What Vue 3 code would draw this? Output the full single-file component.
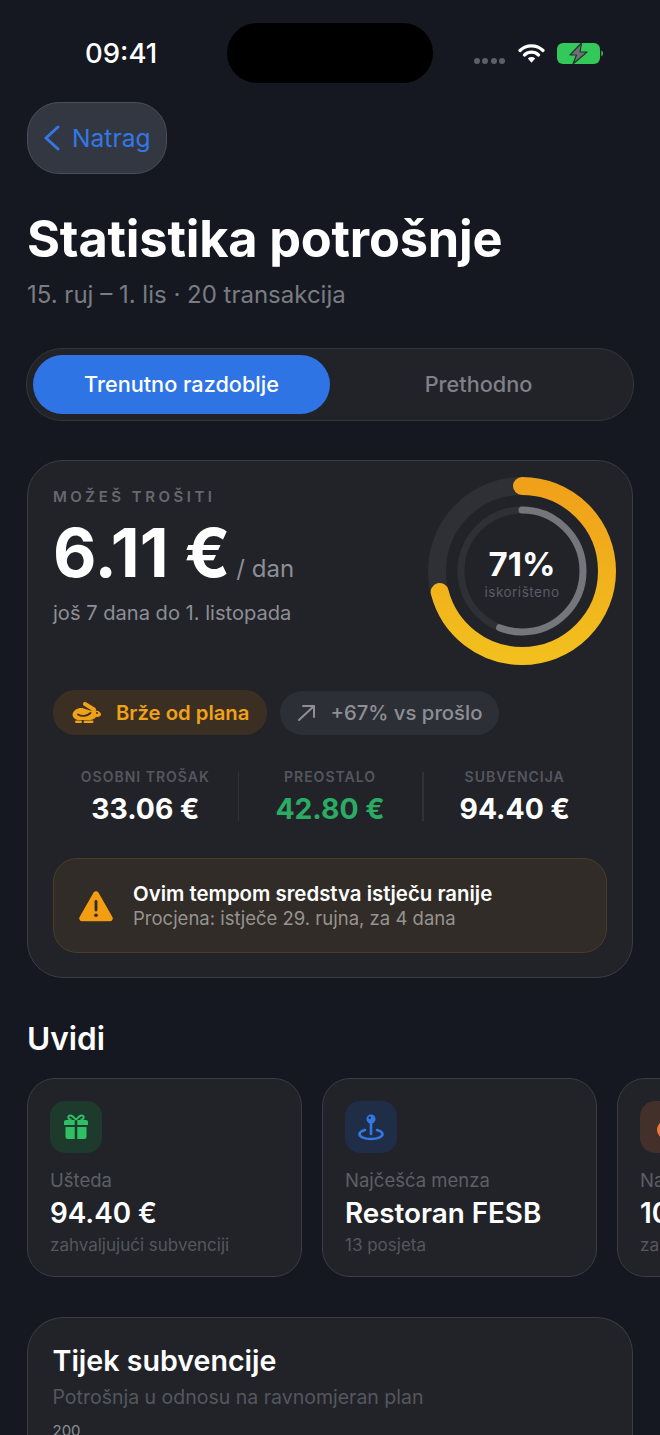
<template>
  <div class="page">
    <div class="status-bar">
      <span class="time">09:41</span>
      <div class="island"></div>
      <div class="status-icons">
        <div class="dots"><i></i><i></i><i></i><i></i></div>
        <svg class="wifi" width="27" height="20" viewBox="0 0 27 20">
          <path d="M2 7.500a16.500 16.500 0 0 1 23 0M6.500 12a10 10 0 0 1 14 0" fill="none" stroke="#fff" stroke-width="3.200" stroke-linecap="round" />
          <path d="M9.800 15.400a5.500 5.500 0 0 1 7.400 0L13.500 19.800z" fill="#fff" />
        </svg>
        <svg class="battery" width="46" height="21" viewBox="0 0 46 21">
          <rect x="0" y="0" width="43" height="21" rx="6" fill="#34c759" />
          <path d="M44.300 7.500v6c1-.4 1.700-1.600 1.700-3s-.7-2.600-1.700-3z" fill="#34c759" />
          <path d="M24.500 0 13 12h6.500L16 21 30 9h-7z" fill="#6d7076" stroke="#20352a" stroke-width="1.200" stroke-linejoin="round" />
        </svg>
      </div>
    </div>

    <div class="content">
      <button class="back">
        <svg width="16" height="26" viewBox="0 0 16 26">
          <path d="M14 2 2 13l12 11" fill="none" stroke="#3478e5" stroke-width="3" stroke-linecap="round" stroke-linejoin="round" />
        </svg>
        <span>Natrag</span>
      </button>

      <h1>Statistika potrošnje</h1>
      <p class="period">15. ruj – 1. lis · 20 transakcija</p>

      <div class="tabs">
        <button class="tab active">Trenutno razdoblje</button>
        <button class="tab">Prethodno</button>
      </div>

      <section class="card main-card">
        <div class="hero">
          <div class="hero-text">
            <div class="eyebrow">MOŽEŠ TROŠITI</div>
            <div class="amount"><strong>6.11 €</strong><span>/ dan</span></div>
            <div class="days">još 7 dana do 1. listopada</div>
          </div>
          <div class="ring">
            <svg width="188" height="188" viewBox="0 0 188 188">
              <defs>
                <linearGradient id="ringGrad" x1="1" y1="0" x2="0" y2="0">
                  <stop offset="0" stop-color="#f0a11a" />
                  <stop offset="1" stop-color="#f2bf1e" />
                </linearGradient>
              </defs>
              <circle cx="94" cy="94" r="85" class="track" stroke-width="18" />
              <circle cx="94" cy="94" r="61" class="track" stroke-width="7" />
              <circle cx="94" cy="94" r="85" class="arc" stroke="url(#ringGrad)" stroke-width="18" pathLength="100" :stroke-dasharray="`${usedPct} 100`" transform="rotate(-90 94 94)" />
              <circle cx="94" cy="94" r="61" class="arc" stroke="#74767c" stroke-width="7" pathLength="100" :stroke-dasharray="`${innerPct} 100`" transform="rotate(-90 94 94)" />
            </svg>
            <div class="ring-label">
              <b>{{ usedPct }}%</b>
              <span>iskorišteno</span>
            </div>
          </div>
        </div>

        <div class="pills">
          <div class="pill pill-warn">
            <svg width="29" height="21" viewBox="0 0 29 21">
              <path d="M.5 12C2 7.500 7 5 12 6.500c3 1 6 2.500 9 2 4-.5 8 1 8 4 0 2-3 2.500-5 2.500-1.500 2.500-5 3-8 3H7c-4 0-6.500-2.500-6.500-6z" fill="#f0a11a" />
              <path d="M13 2 22 7.500" fill="none" stroke="#f0a11a" stroke-width="4" stroke-linecap="round" />
              <path d="M6 12.500c3.500 2.200 9 2 12.500-1.500" fill="none" stroke="#3a2f22" stroke-width="1.800" stroke-linecap="round" />
              <rect x="3" y="18.400" width="7" height="2.600" rx="1.300" fill="#f0a11a" />
              <rect x="11.500" y="18.400" width="10" height="2.600" rx="1.300" fill="#f0a11a" />
              <circle cx="25" cy="11" r="1" fill="#3a2f22" />
            </svg>
            <span>Brže od plana</span>
          </div>
          <div class="pill pill-muted">
            <svg width="18" height="18" viewBox="0 0 18 18">
              <path d="M1 16 16 2M5 2h11v11" fill="none" stroke="#8d8f95" stroke-width="2" stroke-linecap="round" stroke-linejoin="round" />
            </svg>
            <span>+67% vs prošlo</span>
          </div>
        </div>

        <div class="stats">
          <div v-for="s in stats" :key="s.label" class="stat">
            <div class="stat-label">{{ s.label }}</div>
            <div class="stat-value" :class="{ green: s.green }">{{ s.value }}</div>
          </div>
        </div>

        <div class="warning">
          <svg width="36" height="32" viewBox="0 0 36 32">
            <path d="M15.600 2.600a2.800 2.800 0 0 1 4.800 0l14 24.500c1 1.900-.3 4.200-2.400 4.200H4c-2.100 0-3.400-2.300-2.400-4.200z" fill="#f29d12" />
            <rect x="16.600" y="10" width="2.800" height="11.500" rx="1.400" fill="#2e2a26" />
            <circle cx="18" cy="25.300" r="1.800" fill="#2e2a26" />
          </svg>
          <div>
            <div class="warning-title">Ovim tempom sredstva istječu ranije</div>
            <div class="warning-sub">Procjena: istječe 29. rujna, za 4 dana</div>
          </div>
        </div>
      </section>

      <h2>Uvidi</h2>
    </div>

    <div class="insights">
      <div v-for="c in insights" :key="c.label" class="card insight">
        <div class="insight-icon" :class="c.kind">
          <svg v-if="c.kind === 'gift'" width="24" height="26" viewBox="0 0 24 26">
            <path d="M7.500 5.500C5 5.500 4 4.200 4.300 3c.4-1.600 2.500-2 4-.9 1.600 1.100 3 3.400 3.700 3.400.7 0 2.100-2.300 3.700-3.400 1.500-1.100 3.600-.7 4 .9.3 1.200-.7 2.500-3.200 2.500" fill="none" stroke="#2fbf64" stroke-width="2" />
            <path d="M2 6h8.700v5H0V8a2 2 0 0 1 2-2zM13.300 6H22a2 2 0 0 1 2 2v3H13.300zM1.500 13h9.200v12H4a2.500 2.500 0 0 1-2.500-2.500zM13.300 13h9.200v9.500A2.500 2.500 0 0 1 20 25h-6.700z" fill="#2fbf64" />
          </svg>
          <svg v-else-if="c.kind === 'pin'" width="26" height="28" viewBox="0 0 26 28">
            <circle cx="13" cy="6" r="4.500" fill="#3478e5" />
            <circle cx="11.800" cy="4.800" r="1.300" fill="#1f2e46" />
            <path d="M13 10v11" stroke="#3478e5" stroke-width="2.600" stroke-linecap="round" />
            <path d="M7 17c-3.500.9-5.500 2.300-5.500 4.300 0 2.600 5 4.700 11.500 4.700s11.500-2.100 11.500-4.700c0-2-2-3.400-5.500-4.300" fill="none" stroke="#3478e5" stroke-width="2.600" stroke-linecap="round" />
          </svg>
          <svg v-else width="24" height="28" viewBox="0 0 24 28">
            <path d="M12 1c1 5 9 8 9 16a9 9 0 0 1-18 0c0-4 2-6 4-8 .5 2 1.500 3 2.500 3C10 9 10 5 12 1z" fill="#f0793a" />
          </svg>
        </div>
        <div class="insight-label">{{ c.label }}</div>
        <div class="insight-value">{{ c.value }}</div>
        <div class="insight-sub">{{ c.sub }}</div>
      </div>
    </div>

    <div class="content">
      <section class="card chart-card">
        <h3>Tijek subvencije</h3>
        <p>Potrošnja u odnosu na ravnomjeran plan</p>
        <div class="axis-label">200</div>
      </section>
    </div>
  </div>
</template>

<script setup>
const usedPct = 71
const innerPct = 56

const stats = [
  { label: 'OSOBNI TROŠAK', value: '33.06 €' },
  { label: 'PREOSTALO', value: '42.80 €', green: true },
  { label: 'SUBVENCIJA', value: '94.40 €' }
]

const insights = [
  { kind: 'gift', label: 'Ušteda', value: '94.40 €', sub: 'zahvaljujući subvenciji' },
  { kind: 'pin', label: 'Najčešća menza', value: 'Restoran FESB', sub: '13 posjeta' },
  { kind: 'fire', label: 'Najveći niz', value: '10 dana', sub: 'za redom' }
]
</script>

<style>
body {
  margin: 0;
  background: #151821;
}
</style>

<style scoped>
.page {
  height: 1435px;
  overflow: hidden;
  background: #151821;
  color: #fff;
  font-family: Inter, "Liberation Sans", sans-serif;
}

.status-bar {
  display: flex;
  align-items: center;
  height: 60px;
  padding: 23px 0 19px;
  position: relative;
}
.time {
  margin-left: 85px;
  font-size: 27.5px;
  font-weight: 500;
  line-height: 60px;
}
.island {
  position: absolute;
  left: 227px;
  top: 23px;
  width: 206px;
  height: 60px;
  border-radius: 30px;
  background: #000;
}
.status-icons {
  display: flex;
  align-items: center;
  margin-left: auto;
  margin-right: 57px;
  gap: 12px;
}
.dots {
  display: flex;
  gap: 2.500px;
  margin: 16px 1px 0 0;
}
.dots i {
  width: 6px;
  height: 6px;
  border-radius: 50%;
  background: #5c5f66;
}

.content {
  padding: 0 27px;
}

.back {
  display: flex;
  align-items: center;
  gap: 12px;
  width: 140px;
  height: 72px;
  padding: 0 0 0 16px;
  border: 1px solid #4a4e58;
  border-radius: 32px;
  background: #333742;
  color: #3478e5;
  font-family: inherit;
  font-size: 24.6px;
}

h1 {
  margin: 35px 0 0;
  font-size: 50.5px;
  line-height: 60px;
  font-weight: 700;
  letter-spacing: -0.2px;
}
.period {
  margin: 10px 0 0;
  font-size: 24px;
  line-height: 32px;
  color: #7a7c82;
}

.tabs {
  display: grid;
  grid-template-columns: 1fr 1fr;
  margin: 37px -1px 0;
  padding: 6px;
  height: 73px;
  box-sizing: border-box;
  border: 1.5px solid #34363d;
  border-radius: 36px;
  background: #212329;
}
.tab {
  padding: 0 0 2px;
  border: 0;
  border-radius: 30px;
  background: none;
  color: #7f8187;
  font-family: inherit;
  font-size: 21.7px;
  font-weight: 500;
}
.tab.active {
  background: #2f74e4;
  color: #fff;
}

.card {
  box-sizing: border-box;
  border: 1.5px solid #3a3d44;
  background: #212329;
}

.main-card {
  height: 518px;
  margin-top: 39px;
  padding: 26px 25px 24px;
  border-radius: 36px;
}
.hero {
  display: flex;
  justify-content: space-between;
  height: 203px;
}
.eyebrow {
  font-size: 15px;
  line-height: 20px;
  font-weight: 600;
  letter-spacing: 3.500px;
  color: #67696f;
}
.amount {
  display: flex;
  align-items: baseline;
  gap: 6px;
  margin-top: 10px;
}
.amount strong {
  font-size: 67px;
  line-height: 72px;
  font-weight: 700;
}
.amount span {
  font-size: 24px;
  color: #8d8f95;
}
.days {
  margin-top: 11px;
  font-size: 20.1px;
  line-height: 26px;
  color: #8d8f95;
}
.ring {
  position: relative;
  width: 188px;
  height: 188px;
  margin: -10px -9px 0 0;
}
.track {
  fill: none;
  stroke: #2f3036;
}
.arc {
  fill: none;
  stroke-linecap: round;
}
.ring-label {
  position: absolute;
  inset: 4px 0 0;
  display: flex;
  flex-direction: column;
  align-items: center;
  justify-content: center;
}
.ring-label b {
  font-size: 33px;
  line-height: 38px;
  font-weight: 700;
}
.ring-label span {
  font-size: 13.5px;
  line-height: 18px;
  color: #5a5c62;
  letter-spacing: 0.5px;
}

.pills {
  display: flex;
  align-items: center;
  gap: 13px;
}
.pill {
  display: flex;
  align-items: center;
  height: 44px;
  border-radius: 22px;
  font-size: 20.3px;
  font-weight: 600;
}
.pill-warn {
  gap: 15px;
  height: 45px;
  padding: 0 18px 0 19px;
  background: #3a2f22;
  color: #f0a11a;
}
.pill-muted {
  gap: 14px;
  padding: 0 17px 0 18px;
  background: #2d2f37;
  color: #8d8f95;
  font-weight: 500;
}

.stats {
  display: grid;
  grid-template-columns: repeat(3, 1fr);
  margin-top: 33px;
}
.stat {
  position: relative;
  text-align: center;
}
.stat + .stat::before {
  content: "";
  position: absolute;
  left: 0;
  top: 4px;
  width: 1.5px;
  height: 49px;
  background: #303238;
}
.stat-label {
  font-size: 14px;
  line-height: 18px;
  font-weight: 600;
  letter-spacing: 1px;
  color: #55575d;
}
.stat-value {
  margin-top: 6px;
  font-size: 28.3px;
  line-height: 34px;
  font-weight: 700;
}
.stat-value.green {
  color: #2bab63;
}

.warning {
  display: flex;
  align-items: center;
  gap: 19px;
  height: 95px;
  box-sizing: border-box;
  margin-top: 32px;
  padding: 0 24px;
  border: 1.5px solid #4a3c27;
  border-radius: 24px;
  background: #312c28;
}
.warning-title {
  font-size: 20.4px;
  line-height: 25px;
  font-weight: 600;
}
.warning-sub {
  font-size: 18.5px;
  line-height: 24px;
  color: #96948f;
}

h2 {
  margin: 41px 0 0;
  font-size: 31.6px;
  line-height: 40px;
  font-weight: 600;
}

.insights {
  display: flex;
  gap: 20px;
  margin-top: 19px;
  padding-left: 27px;
  overflow: hidden;
}
.insight {
  flex: 0 0 275px;
  height: 199px;
  padding: 22px 22px 0;
  border-radius: 28px;
}
.insight-icon {
  display: flex;
  align-items: center;
  justify-content: center;
  width: 52px;
  height: 52px;
  border-radius: 15px;
}
.insight-icon.gift { background: #1e3a2c; }
.insight-icon.pin { background: #1f2e46; }
.insight-icon.fire { background: #43302a; }
.insight-label {
  margin-top: 15px;
  font-size: 18.5px;
  line-height: 24px;
  color: #5d5f65;
}
.insight-value {
  margin-top: 4px;
  font-size: 27.8px;
  line-height: 34px;
  font-weight: 600;
  white-space: nowrap;
}
.insight-sub {
  margin-top: 4px;
  font-size: 17px;
  line-height: 22px;
  color: #55575d;
  white-space: nowrap;
}

.chart-card {
  height: 200px;
  margin-top: 40px;
  padding: 25px 24.5px 0;
  border-radius: 36px 36px 0 0;
  border-bottom: 0;
}
h3 {
  margin: 0;
  font-size: 28.6px;
  line-height: 36px;
  font-weight: 600;
}
.chart-card p {
  margin: 5px 0 0;
  font-size: 19.5px;
  line-height: 26px;
  color: #55575d;
}
.axis-label {
  margin-top: 11px;
  font-size: 15px;
  line-height: 20px;
  color: #8d8f95;
}
</style>
